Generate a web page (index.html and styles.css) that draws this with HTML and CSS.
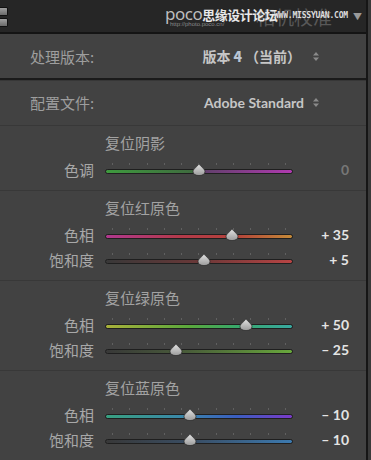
FILE: index.html
```html
<!DOCTYPE html>
<html lang="zh">
<head>
    <meta charset="UTF-8">
    <title>相机校准</title>
    <link rel="stylesheet" href="styles.css">
</head>
<body>
    <div class="frame">
        <div class="panel">
            <div class="header">
                <div class="grip"><span></span><span></span></div>
                <span class="title">相机校准</span>
                <div class="mark">
                    <span class="poco">poco</span><span class="site">思缘设计论坛</span>
                    <span class="url">http://photo.poco.cn/</span>
                </div>
                <span class="missyuan">WWW.MISSYUAN.COM</span>
                <span class="caret">▼</span>
            </div>

            <div class="setting first">
                <span class="setting-label">处理版本:</span>
                <span class="setting-value">版本 <b class="num">4</b>（当前）<svg class="updown" width="6" height="9" viewBox="0 0 6 9"><path d="M3 0 L6 3.5 H0Z M3 9 L6 5.5 H0Z" fill="#8a8a8a"/></svg></span>
            </div>
            <div class="setting">
                <span class="setting-label">配置文件:</span>
                <span class="setting-value latin">Adobe Standard<svg class="updown" width="6" height="9" viewBox="0 0 6 9"><path d="M3 0 L6 3.5 H0Z M3 9 L6 5.5 H0Z" fill="#8a8a8a"/></svg></span>
            </div>

            <div class="group">
                <div class="group-title">复位阴影</div>
                <div class="slider">
                    <span class="slider-label">色调</span>
                    <div class="track-wrap">
                        <div class="ticks"><i></i><i></i><i></i><i></i><i></i><i></i><i></i><i></i><i></i><i></i><i></i></div>
                        <div class="track tint"></div>
                        <svg class="thumb" style="left: 50%" width="14" height="13" viewBox="0 0 14 13"><path d="M7 0.5 C8 3.5 13 5.5 13 8.8 A6 3.8 0 0 1 1 8.8 C1 5.5 6 3.5 7 0.5Z" fill="url(#knob)" stroke="#262626" stroke-width="0.7"/></svg>
                    </div>
                    <span class="slider-value dim">0</span>
                </div>
            </div>

            <div class="group">
                <div class="group-title">复位红原色</div>
                <div class="slider">
                    <span class="slider-label">色相</span>
                    <div class="track-wrap">
                        <div class="ticks"><i></i><i></i><i></i><i></i><i></i><i></i><i></i><i></i><i></i><i></i><i></i></div>
                        <div class="track red-hue"></div>
                        <svg class="thumb" style="left: 67.5%" width="14" height="13" viewBox="0 0 14 13"><path d="M7 0.5 C8 3.5 13 5.5 13 8.8 A6 3.8 0 0 1 1 8.8 C1 5.5 6 3.5 7 0.5Z" fill="url(#knob)" stroke="#262626" stroke-width="0.7"/></svg>
                    </div>
                    <span class="slider-value">+ 35</span>
                </div>
                <div class="slider">
                    <span class="slider-label">饱和度</span>
                    <div class="track-wrap">
                        <div class="ticks"><i></i><i></i><i></i><i></i><i></i><i></i><i></i><i></i><i></i><i></i><i></i></div>
                        <div class="track red-sat"></div>
                        <svg class="thumb" style="left: 52.5%" width="14" height="13" viewBox="0 0 14 13"><path d="M7 0.5 C8 3.5 13 5.5 13 8.8 A6 3.8 0 0 1 1 8.8 C1 5.5 6 3.5 7 0.5Z" fill="url(#knob)" stroke="#262626" stroke-width="0.7"/></svg>
                    </div>
                    <span class="slider-value">+ 5</span>
                </div>
            </div>

            <div class="group">
                <div class="group-title">复位绿原色</div>
                <div class="slider">
                    <span class="slider-label">色相</span>
                    <div class="track-wrap">
                        <div class="ticks"><i></i><i></i><i></i><i></i><i></i><i></i><i></i><i></i><i></i><i></i><i></i></div>
                        <div class="track green-hue"></div>
                        <svg class="thumb" style="left: 75%" width="14" height="13" viewBox="0 0 14 13"><path d="M7 0.5 C8 3.5 13 5.5 13 8.8 A6 3.8 0 0 1 1 8.8 C1 5.5 6 3.5 7 0.5Z" fill="url(#knob)" stroke="#262626" stroke-width="0.7"/></svg>
                    </div>
                    <span class="slider-value">+ 50</span>
                </div>
                <div class="slider">
                    <span class="slider-label">饱和度</span>
                    <div class="track-wrap">
                        <div class="ticks"><i></i><i></i><i></i><i></i><i></i><i></i><i></i><i></i><i></i><i></i><i></i></div>
                        <div class="track green-sat"></div>
                        <svg class="thumb" style="left: 37.5%" width="14" height="13" viewBox="0 0 14 13"><path d="M7 0.5 C8 3.5 13 5.5 13 8.8 A6 3.8 0 0 1 1 8.8 C1 5.5 6 3.5 7 0.5Z" fill="url(#knob)" stroke="#262626" stroke-width="0.7"/></svg>
                    </div>
                    <span class="slider-value">– 25</span>
                </div>
            </div>

            <div class="group">
                <div class="group-title">复位蓝原色</div>
                <div class="slider">
                    <span class="slider-label">色相</span>
                    <div class="track-wrap">
                        <div class="ticks"><i></i><i></i><i></i><i></i><i></i><i></i><i></i><i></i><i></i><i></i><i></i></div>
                        <div class="track blue-hue"></div>
                        <svg class="thumb" style="left: 45%" width="14" height="13" viewBox="0 0 14 13"><path d="M7 0.5 C8 3.5 13 5.5 13 8.8 A6 3.8 0 0 1 1 8.8 C1 5.5 6 3.5 7 0.5Z" fill="url(#knob)" stroke="#262626" stroke-width="0.7"/></svg>
                    </div>
                    <span class="slider-value">– 10</span>
                </div>
                <div class="slider">
                    <span class="slider-label">饱和度</span>
                    <div class="track-wrap">
                        <div class="ticks"><i></i><i></i><i></i><i></i><i></i><i></i><i></i><i></i><i></i><i></i><i></i></div>
                        <div class="track blue-sat"></div>
                        <svg class="thumb" style="left: 45%" width="14" height="13" viewBox="0 0 14 13"><path d="M7 0.5 C8 3.5 13 5.5 13 8.8 A6 3.8 0 0 1 1 8.8 C1 5.5 6 3.5 7 0.5Z" fill="url(#knob)" stroke="#262626" stroke-width="0.7"/></svg>
                    </div>
                    <span class="slider-value">– 10</span>
                </div>
            </div>
        </div>
        <div class="edge"></div>
    </div>

    <svg width="0" height="0" style="position: absolute">
        <defs>
            <linearGradient id="knob" x1="0" y1="0" x2="0" y2="1">
                <stop offset="0" stop-color="#e6e6e6"/>
                <stop offset="1" stop-color="#9a9a9a"/>
            </linearGradient>
        </defs>
    </svg>
</body>
</html>
```

FILE: styles.css
```css
body {
    margin: 0;
    background-color: #3a3a3a;
    font-family: "Noto Sans CJK SC", "Noto Sans", sans-serif;
    color: #a9a9a9;
    overflow: hidden;
}
.frame {
    display: flex;
    height: 460px;
}
.panel {
    width: 366px;
    background-color: #424242;
    display: flex;
    flex-direction: column;
}
.edge {
    width: 2px;
    background-color: #161616;
}

/* header */
.header {
    position: relative;
    height: 33px;
    background-color: #262626;
    border-bottom: 2px solid #141414;
    display: flex;
    align-items: flex-start;
}
.grip {
    margin-top: 7px;
    width: 8px;
    display: flex;
    flex-direction: column;
    gap: 2px;
}
.grip span {
    height: 7px;
    background: linear-gradient(#a0a0a0, #6a6a6a);
    border-radius: 0 2px 2px 0;
    border: 1px solid #111;
    border-left: none;
}
.mark {
    position: absolute;
    left: 165px;
    top: 1px;
    white-space: nowrap;
}
.poco {
    font-family: "Noto Sans", sans-serif;
    font-size: 17px;
    color: #bdbdbd;
    letter-spacing: -0.5px;
}
.site {
    font-size: 13px;
    font-weight: bold;
    color: #e8e8e8;
    letter-spacing: -0.5px;
}
.url {
    position: absolute;
    left: 5px;
    top: 20px;
    font-family: "Liberation Sans", sans-serif;
    font-size: 6px;
    color: #8a8a8a;
}
.title {
    position: absolute;
    left: 256px;
    top: 5px;
    font-size: 19px;
    line-height: 24px;
    color: #585858;
}
.missyuan {
    position: absolute;
    left: 274px;
    top: 11px;
    font-family: "DejaVu Sans Mono", monospace;
    font-size: 8px;
    font-weight: bold;
    color: #dcdcdc;
    letter-spacing: -0.2px;
}
.caret {
    position: absolute;
    left: 353px;
    top: 10px;
    font-size: 9px;
    color: #9a9a9a;
}

/* settings rows */
.setting {
    height: 45px;
    display: flex;
    align-items: center;
    padding: 0 47px 0 30px;
    justify-content: space-between;
    border-top: 1px solid #373737;
}
.setting.first {
    height: 44px;
    border-top: none;
    border-bottom: 2px solid #1a1a1a;
}
.setting-label {
    font-size: 15px;
    color: #9e9e9e;
}
.setting-value {
    font-size: 14px;
    font-weight: bold;
    color: #c6c6c6;
    display: flex;
    align-items: center;
}
.setting-value .num {
    margin: 0 3px;
    color: #b8c4d4;
}
.setting-value.latin {
    font-family: "Lato", "Noto Sans", sans-serif;
    font-size: 14px;
}
.updown {
    margin-left: 9px;
}
.setting.first .updown {
    margin-left: 12px;
}

/* slider groups */
.group {
    border-top: 1px solid #383838;
    padding: 8px 0;
}
.group-title {
    padding-left: 105px;
    font-size: 15px;
    line-height: 18px;
    color: #a2a2a2;
    margin-bottom: 5px;
}
.slider {
    height: 25px;
    display: flex;
    align-items: center;
}
.slider-label {
    width: 94px;
    text-align: right;
    font-size: 15px;
    color: #a8a8a8;
}
.track-wrap {
    position: relative;
    margin-left: 11px;
    width: 188px;
    height: 16px;
}
.ticks {
    display: flex;
    justify-content: space-between;
    padding: 0 7px;
    height: 2px;
    margin-top: 1px;
}
.ticks i {
    width: 1px;
    height: 2px;
    background-color: #606060;
}
.track {
    margin-top: 4px;
    height: 3px;
    border: 1px solid #1f1f1f;
    border-radius: 3px;
}
.thumb {
    position: absolute;
    top: 1px;
    margin-left: -7px;
}
.slider-value {
    width: 56px;
    text-align: right;
    font-family: "Lato", "Noto Sans", sans-serif;
    font-size: 14px;
    font-weight: bold;
    color: #e4e4e4;
}
.slider-value.dim {
    color: #777;
}

.tint { background: linear-gradient(to right, #3e9a3e, #3f6a3f 48%, #60406a 52%, #b03ab0); }
.red-hue { background: linear-gradient(to right, #b0388e, #b43a4a 40%, #b4423a 70%, #c48a38); }
.red-sat { background: linear-gradient(to right, #383838, #6a3838 50%, #b84444); }
.green-hue { background: linear-gradient(to right, #a8b03a, #5aa83c 45%, #38a86a 70%, #38a8a0); }
.green-sat { background: linear-gradient(to right, #383838, #4a5e3a 45%, #68a83c); }
.blue-hue { background: linear-gradient(to right, #38a080, #3a88a8 40%, #3a5ec0 70%, #7a3ac8); }
.blue-sat { background: linear-gradient(to right, #383838, #3a5068 50%, #3c7ab0); }
```
